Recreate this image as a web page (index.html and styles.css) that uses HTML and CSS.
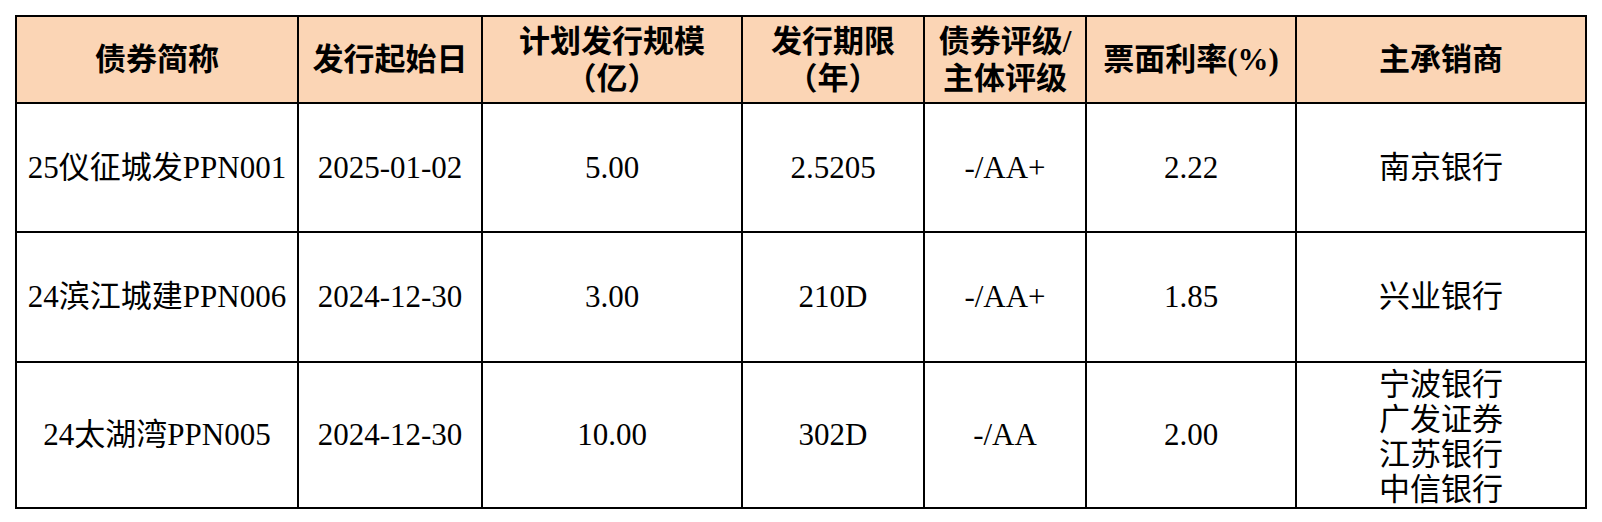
FILE: index.html
```html
<!DOCTYPE html>
<html lang="zh-CN">
<head>
<meta charset="utf-8">
<title>债券发行</title>
<link rel="stylesheet" href="styles.css">
</head>
<body>
<table class="bonds">
  <colgroup>
    <col class="c1"><col class="c2"><col class="c3"><col class="c4"><col class="c5"><col class="c6"><col class="c7">
  </colgroup>
  <thead>
    <tr class="head">
      <th>债券简称</th>
      <th>发行起始日</th>
      <th>计划发行规模<br>（亿）</th>
      <th>发行期限<br>（年）</th>
      <th>债券评级/<br>主体评级</th>
      <th>票面利率(%)</th>
      <th>主承销商</th>
    </tr>
  </thead>
  <tbody>
    <tr class="r1">
      <td>25仪征城发PPN001</td>
      <td>2025-01-02</td>
      <td>5.00</td>
      <td>2.5205</td>
      <td>-/AA+</td>
      <td>2.22</td>
      <td>南京银行</td>
    </tr>
    <tr class="r2">
      <td>24滨江城建PPN006</td>
      <td>2024-12-30</td>
      <td>3.00</td>
      <td>210D</td>
      <td>-/AA+</td>
      <td>1.85</td>
      <td>兴业银行</td>
    </tr>
    <tr class="r3">
      <td>24太湖湾PPN005</td>
      <td>2024-12-30</td>
      <td>10.00</td>
      <td>302D</td>
      <td>-/AA</td>
      <td>2.00</td>
      <td class="multi">宁波银行<br>广发证券<br>江苏银行<br>中信银行</td>
    </tr>
  </tbody>
</table>
</body>
</html>
```

FILE: styles.css
```css
html, body {
  margin: 0;
  padding: 0;
  background: #ffffff;
}

body {
  padding: 15px 0 0 15px;
}

.bonds {
  border-collapse: collapse;
  table-layout: fixed;
  width: 1572px;
  font-family: "Liberation Serif", "Noto Sans CJK SC", serif;
  font-size: 31px;
  color: #000;
}

.c1 { width: 282px; }
.c2 { width: 184px; }
.c3 { width: 260px; }
.c4 { width: 182px; }
.c5 { width: 162px; }
.c6 { width: 210px; }
.c7 { width: 290px; }

.bonds th,
.bonds td {
  border: 2px solid #000;
  padding: 0;
  text-align: center;
  vertical-align: middle;
  line-height: 36px;
  white-space: nowrap;
}

.bonds th {
  background: #fbd5b5;
  font-weight: 700;
  line-height: 37px;
}

.head { height: 87px; }
.r1 { height: 129px; }
.r2 { height: 130px; }
.r3 { height: 143px; }

.bonds td.multi {
  line-height: 35px;
  padding-top: 4px;
}
```
